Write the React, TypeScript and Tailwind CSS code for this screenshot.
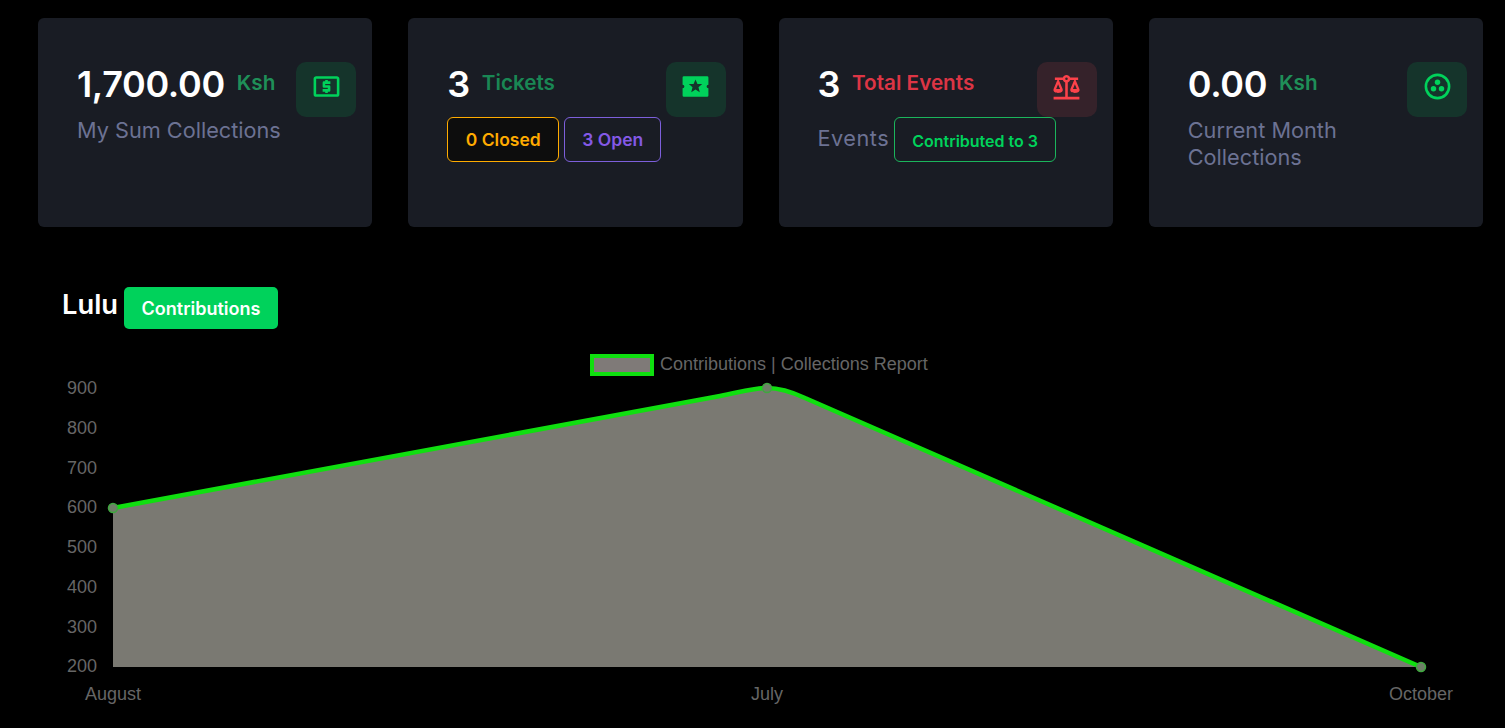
import React from "react";

const Icon = ({ d, className }: { d: string; className: string }) => (
  <svg viewBox="0 0 24 24" className={className} fill="currentColor" aria-hidden="true">
    <path d={d} />
  </svg>
);

const CASH = "M20,18H4V6H20M20,4H4C2.89,4 2,4.89 2,6V18A2,2 0 0,0 4,20H20A2,2 0 0,0 22,18V6C22,4.89 21.1,4 20,4M11,17H13V16H14A1,1 0 0,0 15,15V12A1,1 0 0,0 14,11H11V10H15V8H13V7H11V8H10A1,1 0 0,0 9,9V12A1,1 0 0,0 10,13H13V14H9V16H11V17Z";
const TICKET = "M3 4H21A1 1 0 0 1 22 5V10.6A1.4 1.4 0 0 0 22 13.4V19A1 1 0 0 1 21 20H3A1 1 0 0 1 2 19V13.4A1.4 1.4 0 0 0 2 10.6V5A1 1 0 0 1 3 4ZM12 6.6L10.5 10H6.8L9.7 12.6L8.7 16.4L12 14.4L15.3 16.4L14.3 12.6L17.2 10H13.5Z";
const SCALE = "M12,3C10.73,3 9.6,3.8 9.18,5H3V7H4.95L2,14C1.53,16 3,17 5.5,17C8,17 9.56,16 9,14L6.05,7H9.17C9.5,7.85 10.15,8.5 11,8.83V20H2V22H22V20H13V8.82C13.85,8.5 14.5,7.85 14.82,7H17.95L15,14C14.53,16 16,17 18.5,17C21,17 22.56,16 22,14L19.05,7H21V5H14.83C14.4,3.8 13.27,3 12,3M12,5A1,1 0 0,1 13,6A1,1 0 0,1 12,7A1,1 0 0,1 11,6A1,1 0 0,1 12,5M5.5,10.25L7,14H4L5.5,10.25M18.5,10.25L20,14H17L18.5,10.25Z";

const IconBox = ({ red, shifted, children }: { red?: boolean; shifted?: boolean; children: React.ReactNode }) => (
  <div
    className={`absolute top-[44px] flex h-[55px] w-[60px] justify-center rounded-[10px] pt-[9px] ${
      shifted ? "right-[17px]" : "right-[16px]"
    } ${red ? "bg-[#35222a] text-[#fc424a]" : "bg-[#15342b] text-[#00d25b]"}`}
  >
    {children}
  </div>
);

const Headline = ({ value, unit, color }: { value: string; unit: string; color: string }) => (
  <div className="flex h-[44px] items-center">
    <span className="text-[36px] font-semibold leading-[44px] tracking-[-0.35px] text-white">{value}</span>
    <span className={`ml-[12px] -translate-y-[1px] text-[20.7px] font-semibold leading-[30px] ${color}`}>{unit}</span>
  </div>
);

const Sub = ({ children }: { children: React.ReactNode }) => (
  <p className="text-[21.7px] font-normal leading-[27px] text-[#6c7293]">{children}</p>
);

const Tag = ({ className, children }: { className: string; children: React.ReactNode }) => (
  <span className={`flex h-[45px] items-center justify-center rounded-[6px] border pt-[2px] ${className}`}>{children}</span>
);

const Card = ({ children }: { children: React.ReactNode }) => (
  <div className="relative h-[209px] rounded-[6px] bg-[#191c24] pl-[39px] pt-[44px]">{children}</div>
);

const yTicks = [
  ["900", 388],
  ["800", 428],
  ["700", 468],
  ["600", 507],
  ["500", 547],
  ["400", 587],
  ["300", 627],
  ["200", 666],
] as const;

const line = "M113 508L720 396C745 391 755 388 767 388C780 388 790 391 805 398L1421 667";

const Chart = () => (
  <svg viewBox="0 345 1505 383" className="mt-[16px] block h-[383px] w-[1505px]" style={{ fontFamily: '"Liberation Sans", Arial, sans-serif' }}>
    <rect x="592" y="356" width="60" height="18" fill="#7f7a78" stroke="#0fdf0f" strokeWidth="4" />
    <text x="660" y="370" fontSize="18" fill="#666">Contributions | Collections Report</text>
    {yTicks.map(([t, y]) => (
      <text key={t} x="97" y={y + 6} fontSize="18" textAnchor="end" fill="#666">{t}</text>
    ))}
    <text x="113" y="700" fontSize="18" textAnchor="middle" fill="#666">August</text>
    <text x="767" y="700" fontSize="18" textAnchor="middle" fill="#666">July</text>
    <text x="1421" y="700" fontSize="18" textAnchor="middle" fill="#666">October</text>
    <path d={`${line}L113 667Z`} fill="#7a7972" />
    <path d={line} fill="none" stroke="#10df10" strokeWidth="4.5" />
    {[[113, 508], [767, 388], [1421, 667]].map(([x, y]) => (
      <circle key={x} cx={x} cy={y} r="4.5" fill="#6f7f68" stroke="#3fa83f" strokeWidth="1.5" />
    ))}
  </svg>
);

export default function App() {
  return (
    <div className="h-[728px] w-full overflow-hidden bg-black font-['Inter','Noto_Sans',sans-serif]">
      <div className="grid grid-cols-4 gap-x-[36px] pl-[38px] pr-[22px] pt-[18px]">
        <Card>
          <Headline value="1,700.00" unit="Ksh" color="text-[#1f8f58]" />
          <div className="mt-[11px]"><Sub>My Sum Collections</Sub></div>
          <IconBox><Icon d={CASH} className="h-[31px] w-[31px]" /></IconBox>
        </Card>
        <Card>
          <Headline value="3" unit="Tickets" color="text-[#198754]" />
          <div className="mt-[11px] flex gap-[5px]">
            <Tag className="w-[112px] border-[#ffab00] bg-[#0d0d0d] text-[17.5px] font-semibold text-[#ffab00]">0 Closed</Tag>
            <Tag className="w-[97px] border-[#7d5fdb] text-[17.5px] font-semibold text-[#8459e6]">3 Open</Tag>
          </div>
          <IconBox shifted>
            <svg viewBox="0 0 24 24" className="h-[31px] w-[31px]" fill="currentColor" fillRule="evenodd" aria-hidden="true">
              <path d={TICKET} />
            </svg>
          </IconBox>
        </Card>
        <Card>
          <Headline value="3" unit="Total Events" color="text-[#dc3545]" />
          <div className="mt-[11px] flex items-center gap-[5px]">
            <div className="-translate-y-[1px] tracking-[0.5px]"><Sub>Events</Sub></div>
            <Tag className="w-[162px] border-[#1bb55c] text-[16px] font-semibold text-[#00d25b]">Contributed to 3</Tag>
          </div>
          <IconBox red><Icon d={SCALE} className="h-[31px] w-[31px]" /></IconBox>
        </Card>
        <Card>
          <Headline value="0.00" unit="Ksh" color="text-[#1f8f58]" />
          <div className="mt-[11px] w-[220px]"><Sub>Current Month Collections</Sub></div>
          <IconBox>
            <svg viewBox="0 0 24 24" className="h-[31px] w-[31px]" fill="currentColor" aria-hidden="true">
              <circle cx="12" cy="12" r="9" fill="none" stroke="currentColor" strokeWidth="2" />
              <circle cx="12" cy="8.7" r="2.1" />
              <circle cx="8.9" cy="13.7" r="2.1" />
              <circle cx="15.1" cy="13.7" r="2.1" />
            </svg>
          </IconBox>
        </Card>
      </div>
      <div className="mt-[60px] flex h-[42px] items-center pl-[62px]">
        <span className="-translate-y-[3px] text-[27.3px] font-semibold text-white">Lulu</span>
        <span className="ml-[6px] flex h-[42px] w-[154px] items-center justify-center rounded-[5px] bg-[#00d25b] text-[18px] font-semibold text-white">
          Contributions
        </span>
      </div>
      <Chart />
    </div>
  );
}
